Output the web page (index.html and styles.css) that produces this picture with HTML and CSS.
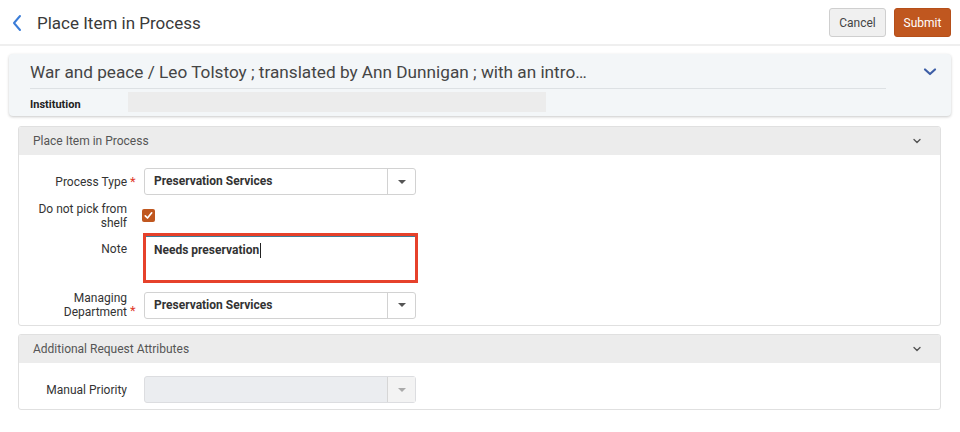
FILE: index.html
```html
<!DOCTYPE html>
<html>
<head>
<meta charset="utf-8">
<link rel="stylesheet" href="styles.css">
</head>
<body>
<header class="topbar">
  <div class="title-wrap">
    <svg class="back" width="12" height="18" viewBox="0 0 12 18"><path d="M9 2 L3 9 L9 16" fill="none" stroke="#3b7dd8" stroke-width="2" stroke-linecap="round" stroke-linejoin="round"/></svg>
    <h1 class="page-title">Place Item in Process</h1>
  </div>
  <div class="actions">
    <button class="btn btn-cancel">Cancel</button>
    <button class="btn btn-submit">Submit</button>
  </div>
</header>

<main class="main">
  <section class="record">
    <div class="record-head">
      <div class="record-title">War and peace / Leo Tolstoy ; translated by Ann Dunnigan ; with an intro…</div>
      <svg class="record-chev" width="14" height="10" viewBox="0 0 14 10"><path d="M2 2.5 L7 7 L12 2.5" fill="none" stroke="#3d5ea6" stroke-width="2.2" stroke-linecap="round" stroke-linejoin="round"/></svg>
    </div>
    <div class="record-row">
      <span class="inst-label">Institution</span>
      <span class="inst-value"></span>
    </div>
  </section>

  <section class="panel">
    <div class="panel-head">
      <span>Place Item in Process</span>
      <svg width="10" height="8" viewBox="0 0 10 8"><path d="M2 2.5 L5 5.5 L8 2.5" fill="none" stroke="#555" stroke-width="1.4" stroke-linecap="round" stroke-linejoin="round"/></svg>
    </div>
    <div class="panel-body">
      <div class="row row-select">
        <label class="lbl">Process Type</label><span class="req">*</span>
        <div class="select"><span class="sel-val">Preservation Services</span><span class="sel-arrow"><i class="tri"></i></span></div>
      </div>
      <div class="row row-check">
        <label class="lbl">Do not pick from<br>shelf</label><span class="req"></span>
        <div class="checkbox"><svg width="13" height="13" viewBox="0 0 13 13"><path d="M3.3 6.8 L5.5 9 L9.7 3.8" fill="none" stroke="#fff" stroke-width="1.7" stroke-linecap="round" stroke-linejoin="round"/></svg></div>
      </div>
      <div class="row row-note">
        <label class="lbl lbl-note">Note</label><span class="req"></span>
        <div class="note"><span class="note-text">Needs preservation</span><span class="caret"></span></div>
      </div>
      <div class="row row-select row-dept">
        <label class="lbl">Managing<br>Department</label><span class="req req-low">*</span>
        <div class="select"><span class="sel-val">Preservation Services</span><span class="sel-arrow"><i class="tri"></i></span></div>
      </div>
    </div>
  </section>

  <section class="panel panel-2">
    <div class="panel-head">
      <span>Additional Request Attributes</span>
      <svg width="10" height="8" viewBox="0 0 10 8"><path d="M2 2.5 L5 5.5 L8 2.5" fill="none" stroke="#555" stroke-width="1.4" stroke-linecap="round" stroke-linejoin="round"/></svg>
    </div>
    <div class="panel-body">
      <div class="row row-select">
        <label class="lbl">Manual Priority</label><span class="req"></span>
        <div class="select select-disabled"><span class="sel-val"></span><span class="sel-arrow"><i class="tri tri-light"></i></span></div>
      </div>
    </div>
  </section>
</main>
</body>
</html>
```
FILE: styles.css
```css
* { box-sizing: border-box; }
html, body { margin: 0; padding: 0; background: #fff; }
body {
  width: 960px;
  height: 432px;
  overflow: hidden;
  font-family: Roboto, "Liberation Sans", sans-serif;
  color: #333;
}

.topbar {
  height: 46px;
  border-bottom: 2px solid #efefef;
  display: flex;
  align-items: center;
  justify-content: space-between;
  padding: 0 9px 0 11px;
}
.title-wrap { display: flex; align-items: center; margin-top: 1px; }
.back { display: block; margin-right: 14px; margin-top: 0; }
.page-title {
  margin: 0;
  font-size: 17px;
  font-weight: 400;
  color: #3a3a3a;
  margin-top: 0;
}
.actions { display: flex; gap: 8px; margin-top: 1px; }
.btn {
  font-family: Roboto, "Liberation Sans", sans-serif;
  font-size: 12px;
  height: 29px;
  width: 57px;
  border-radius: 3px;
  padding: 0;
  cursor: pointer;
}
.btn-cancel { background: #f0f0f0; border: 1px solid #cfcfcf; color: #444; }
.btn-submit { background: #c0571f; border: 1px solid #b54f1a; color: #fff; }

.main { padding: 8px 9px 0 9px; }

.record {
  background: #f3f6f8;
  border-radius: 4px;
  box-shadow: 0 1px 3px rgba(0,0,0,0.22);
  height: 62px;
  padding: 0 14px 0 21px;
}
.record-head {
  height: 34px;
  display: flex;
  align-items: center;
  justify-content: space-between;
}
.record-title {
  font-size: 17.2px;
  color: #454545;
  margin-top: 2px;
  flex: 0 0 856px;
  border-bottom: 1px solid #dde1e4;
  height: 34px;
  line-height: 35px;
  white-space: nowrap;
}
.record-chev { display: block; margin-top: 2px; margin-right: 0; }
.record-row {
  display: flex;
  align-items: center;
  height: 27px;
}
.inst-label {
  font-size: 11px;
  font-weight: 700;
  color: #222;
  width: 98px;
  margin-top: 5px;
}
.inst-value {
  display: block;
  width: 418px;
  height: 20px;
  background: #ececec;
  margin-top: 1px;
}

.panel {
  margin: 10px 10px 0 9px;
  border: 1px solid #e0e0e0;
  border-radius: 3px;
  overflow: hidden;
}
.panel-head {
  height: 28px;
  background: #ececec;
  display: flex;
  align-items: center;
  justify-content: space-between;
  padding: 0 18px 0 14px;
  font-size: 12px;
  color: #555;
}
.panel-body {
  padding: 13px 0 6px 0;
  display: flex;
  flex-direction: column;
}
.panel-2 { margin-top: 8px; }
.panel-2 .panel-body { padding: 13px 0 6px 0; }

.row {
  display: grid;
  grid-template-columns: 108px 16px 273px;
  align-items: center;
}
.lbl {
  text-align: right;
  font-size: 12px;
  line-height: 14px;
  color: #333;
}
.req {
  color: #e03a2a;
  font-size: 13px;
  padding-left: 3px;
  align-self: center;
  line-height: 14px;
}
.req-low { align-self: end; margin-bottom: 1px; }

.select {
  height: 27px;
  border: 1px solid #d2d2d2;
  border-radius: 3px;
  display: flex;
  background: #fff;
  margin-left: 1px;
  width: 272px;
}
.sel-val {
  flex: 1;
  font-size: 12px;
  font-weight: 700;
  color: #333;
  line-height: 25px;
  padding-left: 9px;
}
.sel-arrow {
  width: 28px;
  border-left: 1px solid #d2d2d2;
  display: flex;
  align-items: center;
  justify-content: center;
}
.tri {
  display: block;
  width: 0; height: 0;
  border-left: 4px solid transparent;
  border-right: 4px solid transparent;
  border-top: 4px solid #555;
}
.tri-light { border-top-color: #aaa; }
.select-disabled { background: #ebedf0; border-color: #dcdde0; }
.select-disabled .sel-arrow { background: #f3f3f3; border-left-color: #d6d6d6; }

.row-check { margin-top: 7px; align-items: start; height: 28px; }
.checkbox {
  width: 13px; height: 13px;
  background: #c0571f;
  border-radius: 2px;
  margin-top: 7px;
  margin-left: -1px;
}
.checkbox svg { display: block; }

.row-note { margin-top: 3px; align-items: start; }
.lbl-note { margin-top: 9px; }
.note {
  height: 50px;
  width: 275px;
  border: 3px solid #e6412b;
  margin-left: 0;
  padding: 7px 9px 0 8px;
  display: flex;
  align-items: flex-start;
  box-shadow: inset 0 1px 0 #3d7c9a;
}
.note-text {
  font-size: 12px;
  font-weight: 700;
  color: #333;
  line-height: 14px;
}
.caret {
  display: block;
  width: 1px;
  height: 15px;
  background: #222;
  margin-left: 1px;
}

.row-dept { margin-top: 8px; }
.row-dept .lbl { line-height: 14px; }
```
